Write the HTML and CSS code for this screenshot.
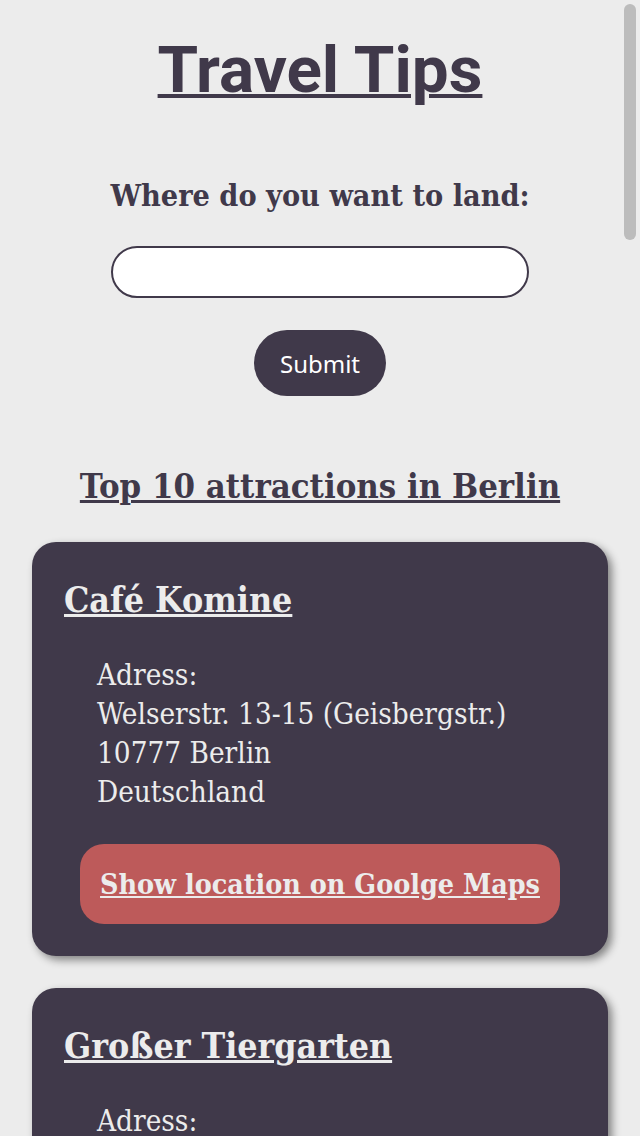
FILE: index.html
```html
<!DOCTYPE html>
<html lang="en">
<head>
<meta charset="utf-8">
<title>Travel Tips</title>
<link rel="stylesheet" href="styles.css">
</head>
<body>
<main class="page">
  <h1 class="title">Travel Tips</h1>
  <form class="search">
    <label class="search-label" for="dest">Where do you want to land:</label>
    <input class="search-input" id="dest" type="text">
    <button class="search-submit" type="button">Submit</button>
  </form>
  <h2 class="results-title">Top 10 attractions in Berlin</h2>
  <section class="cards">
    <article class="card">
      <h3 class="card-title">Café Komine</h3>
      <p class="card-address">Adress:<br>Welserstr. 13-15 (Geisbergstr.)<br>10777 Berlin<br>Deutschland</p>
      <a class="card-link" href="#">Show location on Goolge Maps</a>
    </article>
    <article class="card">
      <h3 class="card-title">Großer Tiergarten</h3>
      <p class="card-address">Adress:<br>Straße des 17. Juni<br>10785 Berlin<br>Deutschland</p>
      <a class="card-link" href="#">Show location on Goolge Maps</a>
    </article>
  </section>
</main>
<div class="scroll-thumb"></div>
</body>
</html>
```
FILE: styles.css
```css
html {
  scrollbar-width: none;
}
html::-webkit-scrollbar {
  display: none;
}
body {
  margin: 0;
  background: #ececec;
  color: #40394a;
  font-family: "DejaVu Serif Condensed", "DejaVu Serif", serif;
}
.page {
  display: flex;
  flex-direction: column;
  align-items: center;
  padding: 0 32px;
}
.title {
  margin: 38px 0 0;
  font-family: Roboto, "Liberation Sans", sans-serif;
  font-stretch: normal;
  font-weight: 700;
  font-size: 65.6px;
  line-height: 64px;
  text-decoration: underline;
  text-decoration-thickness: 4px;
}
.search {
  display: flex;
  flex-direction: column;
  align-items: center;
  margin-top: 76px;
  font-stretch: condensed;
}
.search-label {
  font-weight: 700;
  font-size: 30.3px;
  line-height: 36px;
}
.search-input {
  box-sizing: border-box;
  width: 418px;
  height: 52px;
  margin-top: 32px;
  border: 2px solid #40394a;
  border-radius: 26px;
  background: #fff;
  padding: 0 20px;
  font-size: 24px;
}
.search-submit {
  width: 132px;
  height: 66px;
  margin-top: 32px;
  border: 0;
  border-radius: 33px;
  background: #40394a;
  color: #fff;
  font-family: "Noto Sans", sans-serif;
  font-stretch: normal;
  font-size: 24px;
}
.results-title {
  margin: 70px 0 0;
  font-stretch: condensed;
  font-weight: 700;
  font-size: 34.4px;
  line-height: 40px;
  text-decoration: underline;
}
.cards {
  display: flex;
  flex-direction: column;
  gap: 32px;
  align-self: stretch;
  margin-top: 36px;
  font-stretch: condensed;
}
.card {
  display: flex;
  flex-direction: column;
  padding: 34px 48px 32px 32px;
  border-radius: 24px;
  background: #40394a;
  color: #ececec;
  box-shadow: 4px 4px 8px rgba(0, 0, 0, 0.45);
}
.card-title {
  margin: 0;
  font-size: 35.4px;
  line-height: 48px;
  text-decoration: underline;
}
.card-address {
  margin: 32px 0 0 33px;
  font-size: 29.4px;
  line-height: 39px;
}
.card-link {
  display: block;
  margin: 32px 0 0 16px;
  padding: 22px 0;
  border-radius: 24px;
  background: #bd5a5a;
  color: #ececec;
  text-align: center;
  font-weight: 700;
  font-size: 28.4px;
  line-height: 36px;
}
.scroll-thumb {
  position: fixed;
  top: 4px;
  right: 4px;
  width: 12px;
  height: 236px;
  border-radius: 6px;
  background: #bcbcbc;
}
```
